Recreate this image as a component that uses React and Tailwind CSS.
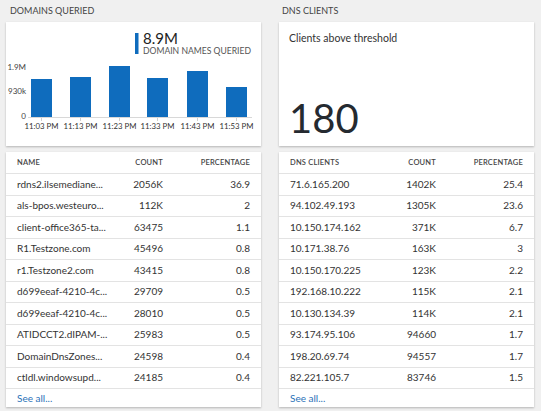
import React from 'react';

const FONT = 'Lato, "Liberation Sans", Arial, sans-serif';

const domains = [
    ['rdns2.ilsemediane...', '2056K', '36.9'],
    ['als-bpos.westeuro...', '112K', '2'],
    ['client-office365-ta...', '63475', '1.1'],
    ['R1.Testzone.com', '45496', '0.8'],
    ['r1.Testzone2.com', '43415', '0.8'],
    ['d699eeaf-4210-4c...', '29709', '0.5'],
    ['d699eeaf-4210-4c...', '28010', '0.5'],
    ['ATIDCCT2.dIPAM-...', '25983', '0.5'],
    ['DomainDnsZones...', '24598', '0.4'],
    ['ctldl.windowsupd...', '24185', '0.4'],
];

const clients = [
    ['71.6.165.200', '1402K', '25.4'],
    ['94.102.49.193', '1305K', '23.6'],
    ['10.150.174.162', '371K', '6.7'],
    ['10.171.38.76', '163K', '3'],
    ['10.150.170.225', '123K', '2.2'],
    ['192.168.10.222', '115K', '2.1'],
    ['10.130.134.39', '114K', '2.1'],
    ['93.174.95.106', '94660', '1.7'],
    ['198.20.69.74', '94557', '1.7'],
    ['82.221.105.7', '83746', '1.5'],
];

// bar chart data: [left x, top y] in card coords
const bars = [
    [25, 57, '11:03 PM'],
    [64, 55, '11:13 PM'],
    [103, 44, '11:23 PM'],
    [141, 56, '11:33 PM'],
    [181, 49, '11:43 PM'],
    [220, 65, '11:53 PM'],
];

const Card = ({ className = '', children }) => (
    <div className={`bg-white shadow-[0_1px_2px_rgba(0,0,0,0.25)] ${className}`}>{children}</div>
);

const DomainsChart = () => (
    <svg width="255" height="124" className="block" style={{ fontFamily: FONT }}>
        {/* legend */}
        <rect x="129" y="11" width="3.5" height="21" fill="#0f6cbd" />
        <text x="137" y="22" fontSize="15" fill="#222">8.9M</text>
        <text x="137" y="32" fontSize="8.6" fill="#555">DOMAIN NAMES QUERIED</text>

        {/* y axis */}
        <text x="20" y="47.5" fontSize="8" fill="#444" textAnchor="end">1.9M</text>
        <text x="20" y="72" fontSize="8" fill="#444" textAnchor="end">930k</text>
        <text x="20" y="97" fontSize="8" fill="#444" textAnchor="end">0</text>

        <line x1="22" y1="95.5" x2="246" y2="95.5" stroke="#d8d8d8" strokeWidth="1" />

        {bars.map(([x, top, label]) => (
            <g key={label}>
                <rect x={x} y={top} width="21" height={95 - top} fill="#0f6cbd" />
                <line x1={x + 10.5} y1="96" x2={x + 10.5} y2="99" stroke="#d0d0d0" />
                <text x={x + 10.5} y="107" fontSize="7.8" fill="#333" textAnchor="middle">{label}</text>
            </g>
        ))}
    </svg>
);

const DataTable = ({ heading, rows }) => (
    <Card className="h-[255px] flex flex-col text-[#333]">
        <div className="grid grid-cols-[minmax(0,1fr)_60px_87px] px-[11px] h-[21px] items-center text-[7.5px] font-semibold tracking-[0.2px] text-[#444] uppercase">
            <span>{heading}</span>
            <span className="text-right">Count</span>
            <span className="text-right">Percentage</span>
        </div>
        {rows.map(([name, count, pct], i) => (
            <div
                key={i}
                className="grid grid-cols-[minmax(0,1fr)_60px_87px] px-[11px] h-[21.5px] items-center border-t border-[#e3e3e3] text-[10px]"
            >
                <span className="whitespace-nowrap">{name}</span>
                <span className="text-right">{count}</span>
                <span className="text-right">{pct}</span>
            </div>
        ))}
        <div className="flex-1 flex items-center px-[11px] border-t border-[#e3e3e3] text-[10px] text-[#2a72b8]">
            See all...
        </div>
    </Card>
);

const App = () => {
    return (
        <div
            className="w-[541px] h-[411px] bg-[#f0f0f0] overflow-hidden grid grid-cols-[255px_255px] gap-x-[18px] pl-[6px]"
            style={{ fontFamily: FONT }}
        >
            {/* Domains column */}
            <div className="flex flex-col">
                <div className="h-[22px] pl-[4px] pt-[4px] text-[9px] text-[#444] uppercase leading-[14px]">
                    Domains Queried
                </div>
                <Card className="h-[124px]">
                    <DomainsChart />
                </Card>
                <div className="h-[6px]" />
                <DataTable heading="Name" rows={domains} />
            </div>

            {/* DNS clients column */}
            <div className="flex flex-col">
                <div className="h-[22px] pl-[3px] pt-[4px] text-[9px] text-[#444] uppercase leading-[14px]">
                    DNS Clients
                </div>
                <Card className="h-[124px] flex flex-col justify-between px-[10px] pt-[9px] pb-[8px]">
                    <div className="text-[10.5px] text-[#333]">Clients above threshold</div>
                    <div className="text-[40px] leading-[40px] text-[#252a30]">180</div>
                </Card>
                <div className="h-[6px]" />
                <DataTable heading="DNS Clients" rows={clients} />
            </div>
        </div>
    );
};

export default App;
